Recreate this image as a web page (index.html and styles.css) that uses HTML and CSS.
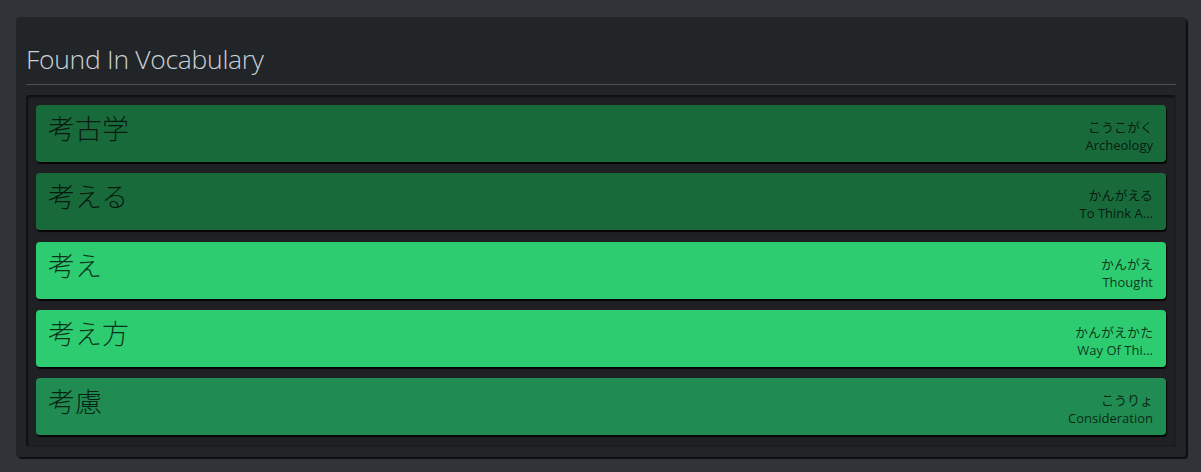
FILE: index.html
```html
<!DOCTYPE html>
<html lang="ja">
<head>
<meta charset="utf-8">
<title>Found In Vocabulary</title>
<link rel="stylesheet" href="styles.css">
</head>
<body>
<div class="page">
  <section class="panel">
    <h2 class="panel-title">Found In Vocabulary</h2>
    <hr class="rule">
    <div class="well">
      <div class="card card-dark">
        <div class="word">考古学</div>
        <div class="info"><div class="reading">こうこがく</div><div class="meaning">Archeology</div></div>
      </div>
      <div class="card card-dark">
        <div class="word">考える</div>
        <div class="info"><div class="reading">かんがえる</div><div class="meaning">To Think A...</div></div>
      </div>
      <div class="card card-bright">
        <div class="word">考え</div>
        <div class="info"><div class="reading">かんがえ</div><div class="meaning">Thought</div></div>
      </div>
      <div class="card card-bright">
        <div class="word">考え方</div>
        <div class="info"><div class="reading">かんがえかた</div><div class="meaning">Way Of Thi...</div></div>
      </div>
      <div class="card card-mid">
        <div class="word">考慮</div>
        <div class="info"><div class="reading">こうりょ</div><div class="meaning">Consideration</div></div>
      </div>
    </div>
  </section>
</div>
</body>
</html>
```

FILE: styles.css
```css
html, body {
  margin: 0;
  padding: 0;
  background: #303439;
  font-family: "Open Sans", "Noto Sans CJK JP", sans-serif;
}
.page {
  padding: 17px 15px 13px 16px;
}
.panel {
  background: #222528;
  border-radius: 4px;
  box-shadow: 2px 2px 1px rgba(0,0,0,0.75);
  padding: 22px 10px 10px 10px;
}
.panel-title {
  margin: 0;
  font-weight: 300;
  font-size: 26.5px;
  line-height: 40px;
  color: #c9d1d9;
  letter-spacing: -0.3px;
}
.rule {
  margin: 5px 0 10px 0;
  border: 0;
  height: 1px;
  background: #4e4f50;
}
.well {
  background: #1e2023;
  border: 1px solid #0f1011;
  border-right-color: #1a1c1e;
  border-bottom-color: #1a1c1e;
  box-shadow: inset 1px 1px 2px rgba(0,0,0,0.6);
  border-radius: 3px;
  padding: 9px 9px 11px 9px;
  display: flex;
  flex-direction: column;
  gap: 11.25px;
}
.card {
  height: 57px;
  box-sizing: border-box;
  border-radius: 4px;
  box-shadow: 1px 2px 1px rgba(0,0,0,0.85);
  display: flex;
  justify-content: space-between;
  align-items: flex-start;
  padding: 6px 13px 0 12px;
  color: rgba(0,0,0,0.75);
}
.card-dark { background: #186a3b; }
.card-bright { background: #2ecc71; }
.card-mid { background: #218c52; }
.word {
  font-family: "Noto Sans CJK JP", sans-serif;
  font-weight: 300;
  font-size: 27px;
  line-height: 34px;
}
.info {
  text-align: right;
  padding-top: 7px;
}
.reading {
  font-family: "Noto Sans CJK JP", sans-serif;
  font-size: 13px;
  line-height: 18px;
}
.meaning {
  font-size: 13px;
  line-height: 18px;
}
```
